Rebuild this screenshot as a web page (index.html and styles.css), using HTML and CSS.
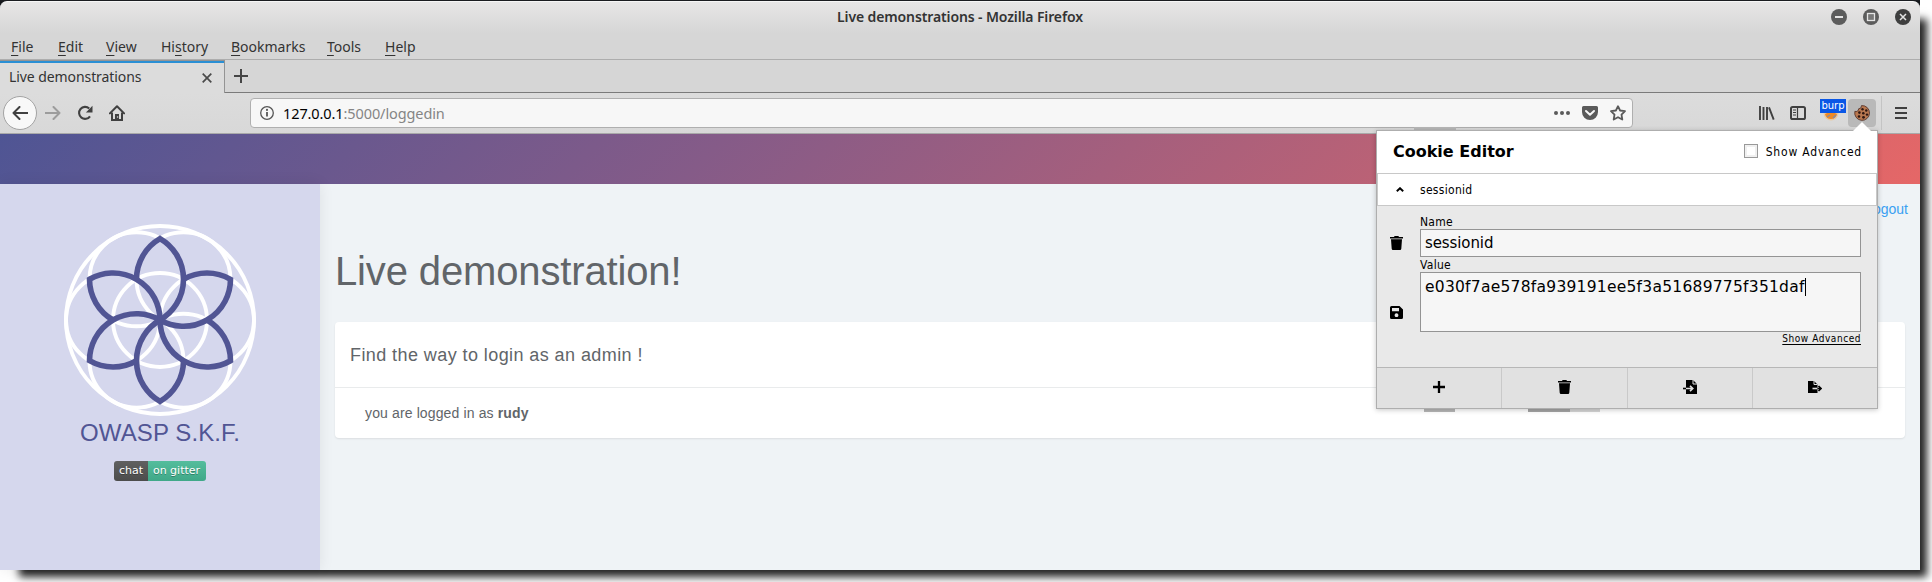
FILE: index.html
```html
<!DOCTYPE html>
<html lang="en">
<head>
<meta charset="utf-8">
<title>Live demonstrations</title>
<link rel="stylesheet" href="styles.css">
</head>
<body>
<div class="window">
  <div class="chrome-top">
    <div class="titlebar">
      <span class="title">Live demonstrations - Mozilla Firefox</span>
      <div class="winbtns">
        <svg width="16" height="16" viewBox="0 0 16 16"><circle cx="8" cy="8" r="8" fill="#5c5c5c"/><path d="M4 8h8" stroke="#e4e4e4" stroke-width="2"/></svg>
        <svg width="16" height="16" viewBox="0 0 16 16"><circle cx="8" cy="8" r="8" fill="#5c5c5c"/><rect x="4.500" y="4.500" width="7" height="7" fill="#777" stroke="#e4e4e4" stroke-width="1.300"/></svg>
        <svg width="16" height="16" viewBox="0 0 16 16"><circle cx="8" cy="8" r="8" fill="#3f3f3f"/><path d="M5 5l6 6M11 5l-6 6" stroke="#e4e4e4" stroke-width="1.5"/></svg>
      </div>
    </div>
    <div class="menubar">
      <span class="m-file"><u>F</u>ile</span><span class="m-edit"><u>E</u>dit</span><span class="m-view"><u>V</u>iew</span><span class="m-history">Hi<u>s</u>tory</span><span class="m-bookmarks"><u>B</u>ookmarks</span><span class="m-tools"><u>T</u>ools</span><span class="m-help"><u>H</u>elp</span>
    </div>
  </div>
  <div class="tabs">
    <div class="tab"><span>Live demonstrations</span>
      <svg width="10" height="10" viewBox="0 0 10 10"><path d="M.7.7l8.6 8.6M9.3.7L.7 9.3" stroke="#4a4a4a" stroke-width="1.7"/></svg>
    </div>
    <div class="newtab"><svg width="14" height="14" viewBox="0 0 14 14"><path d="M7 0v14M0 7h14" stroke="#454545" stroke-width="2"/></svg></div>
  </div>
  <div class="navbar">
    <div class="back"><svg width="16" height="14" viewBox="0 0 16 14"><path d="M15.5 7H1.5M7.5 1l-6 6 6 6" fill="none" stroke="#404040" stroke-width="2" stroke-linecap="round" stroke-linejoin="round"/></svg></div>
    <svg class="fwd" width="16" height="14" viewBox="0 0 16 14"><path d="M.5 7h14M8.500 1l6 6-6 6" fill="none" stroke="#9c9c9c" stroke-width="2" stroke-linecap="round" stroke-linejoin="round"/></svg>
    <svg class="reload" width="16" height="16" viewBox="0 0 16 16"><path d="M12.200 3.500A6 6 0 1 0 13 11.300" fill="none" stroke="#404040" stroke-width="2.100"/><path d="M15.500 .8v6.600H8.900z" fill="#404040"/></svg>
    <svg class="home" width="16" height="16" viewBox="0 0 16 16"><path d="M.9 8.400L8 1.300l7.100 7.100" fill="none" stroke="#404040" stroke-width="2" stroke-linecap="round" stroke-linejoin="round"/><path d="M3 7.500V15h10V7.500" fill="none" stroke="#404040" stroke-width="2"/><path d="M6 9h4v6H6z" fill="#404040"/><circle cx="8.600" cy="12" r=".8" fill="#ddd"/></svg>
    <div class="urlbar">
      <svg width="14" height="14" viewBox="0 0 14 14"><circle cx="7" cy="7" r="6.300" fill="none" stroke="#555" stroke-width="1.300"/><path d="M7 6v4.500" stroke="#555" stroke-width="1.800"/><circle cx="7" cy="3.900" r="1.050" fill="#555"/></svg>
      <span class="url"><b>127.0.0.1</b>:5000/loggedin</span>
      <svg class="dots" width="16" height="4" viewBox="0 0 16 4"><g fill="#5a5a5a"><circle cx="2" cy="2" r="2"/><circle cx="8" cy="2" r="2"/><circle cx="14" cy="2" r="2"/></g></svg>
      <svg class="pocket" width="16" height="14" viewBox="0 0 16 14"><path d="M1.500 0h13A1.500 1.500 0 0 1 16 1.500V6a8 8 0 0 1-16 0V1.500A1.500 1.500 0 0 1 1.500 0z" fill="#5a5a5a"/><path d="M4 5l4 3.800L12 5" fill="none" stroke="#f7f7f7" stroke-width="2" stroke-linecap="round" stroke-linejoin="round"/></svg>
      <svg class="star" width="16" height="16" viewBox="0 0 16 16"><path d="M8 1.200l2.100 4.300 4.900.7-3.500 3.400.8 4.900L8 12.200l-4.300 2.300.8-4.900L1 6.200l4.900-.7z" fill="none" stroke="#5a5a5a" stroke-width="1.800" stroke-linejoin="round"/></svg>
    </div>
    <svg class="library" width="16" height="14" viewBox="0 0 16 14"><path d="M1 0v14M4.500 1v13M8 1v13M10 1.300l4.700 12.300" stroke="#404040" stroke-width="1.900"/></svg>
    <svg class="sidebtn" width="16" height="14" viewBox="0 0 16 14"><rect x="1" y="1" width="14" height="12" rx="1.600" fill="none" stroke="#404040" stroke-width="2"/><path d="M7.500 1v12" stroke="#404040" stroke-width="1.200"/><path d="M3 4h3M3 6.500h3M3 9h3" stroke="#404040"/></svg>
    <div class="burp"><span>burp</span>
      <svg width="16" height="16" viewBox="0 0 16 16"><circle cx="8" cy="8" r="7.500" fill="#e9c9a2"/><path d="M2 9q6-4 12 0-1 5-6 5T2 9z" fill="#f08a24"/><path d="M4 12l3-2M13 10l-3 3" stroke="#7f8bab" stroke-width="1.200"/></svg>
    </div>
    <div class="cookie"><svg width="16" height="16" viewBox="0 0 16 16"><path d="M7.500.6A3 3 0 0 1 4.600 3.800 2.600 2.600 0 0 1 .9 6.300 7.400 7.400 0 1 0 7.500.6z" fill="#b97850" stroke="#4c2b22" stroke-width=".8"/><g fill="#2e1712"><circle cx="8.500" cy="4.200" r="1.200"/><circle cx="12.300" cy="5.500" r="1.200"/><circle cx="5.400" cy="7.600" r="1.300"/><circle cx="9.300" cy="8.200" r="1.300"/><circle cx="13" cy="9.600" r="1.200"/><circle cx="5" cy="11.500" r="1.300"/><circle cx="9.500" cy="12.300" r="1.400"/></g></svg></div>
    <i class="sep"></i>
    <svg class="burger" width="12" height="12" viewBox="0 0 12 12"><path d="M0 1h12M0 6h12M0 11h12" stroke="#404040" stroke-width="2"/></svg>
  </div>
  <div class="banner"></div>
  <div class="page">
    <aside class="sidebar">
      <svg class="logo" width="192" height="192" viewBox="-96 -96 192 192">
        <g fill="none" stroke="#fff" stroke-width="3.900">
          <circle r="94"/><circle r="47"/>
          <circle cx="47" r="47"/><circle cx="-47" r="47"/>
          <circle cx="23.500" cy="-40.700" r="47"/><circle cx="-23.500" cy="-40.700" r="47"/>
          <circle cx="23.500" cy="40.700" r="47"/><circle cx="-23.500" cy="40.700" r="47"/>
        </g>
        <defs><path id="petal" d="M-23.500-40.700A47 47 0 0 1 0-81.400 47 47 0 0 1 0 0"/></defs>
        <g fill="none" stroke="#515594" stroke-width="5.600" stroke-miterlimit="6">
          <use href="#petal"/><use href="#petal" transform="rotate(60)"/><use href="#petal" transform="rotate(120)"/><use href="#petal" transform="rotate(180)"/><use href="#petal" transform="rotate(240)"/><use href="#petal" transform="rotate(300)"/>
        </g>
      </svg>
      <div class="brand">OWASP S.K.F.</div>
      <div class="badge"><span>chat</span><span class="green">on gitter</span></div>
    </aside>
    <main class="main">
      <a class="logout">Logout</a>
      <h1>Live demonstration!</h1>
      <section class="card">
        <h2>Find the way to login as an admin !</h2>
        <p>you are logged in as <b>rudy</b></p>
      </section>
    </main>
  </div>

  <i class="smudge s1"></i><i class="smudge s2"></i><i class="smudge s3"></i><i class="smudge s4"></i>
  <div class="popup">
    <i class="arrow"></i>
    <header><strong>Cookie Editor</strong><i class="check"></i><span class="adv">Show Advanced</span></header>
    <div class="row"><svg width="8" height="5" viewBox="0 0 8 5"><path d="M.8 4.200L4 1.200l3.200 3" fill="none" stroke="#000" stroke-width="1.900"/></svg><span>sessionid</span></div>
    <div class="form">
      <div class="acts">
        <svg class="trash" width="13" height="14" viewBox="0 0 13 14"><path d="M0 1h4l.6-1h3.800L9 1h4v1.600H0zM1 3.300h11l-.7 9.500a1.300 1.300 0 0 1-1.300 1.200H3a1.300 1.300 0 0 1-1.300-1.200z"/></svg>
        <svg width="13" height="13" viewBox="0 0 13 13"><path fill-rule="evenodd" d="M1.500 0h8L13 3.500v8a1.500 1.500 0 0 1-1.500 1.500h-10A1.500 1.500 0 0 1 0 11.500v-10A1.500 1.500 0 0 1 1.500 0zM2 2v3.200h7V2zM6.500 7.300a1.900 1.900 0 1 0 .01 0z"/></svg>
      </div>
      <div class="fields">
        <label>Name</label>
        <div class="input">sessionid</div>
        <label class="lv">Value</label>
        <div class="input area">e030f7ae578fa939191ee5f3a51689775f351daf<i class="caret"></i></div>
        <a>Show Advanced</a>
      </div>
    </div>
    <footer>
      <div><svg width="12" height="12" viewBox="0 0 12 12"><path d="M6 0v12M0 6h12" stroke="#000" stroke-width="2.300"/></svg></div>
      <div><svg width="13" height="14" viewBox="0 0 13 14"><path d="M0 1h4l.6-1h3.800L9 1h4v1.600H0zM1 3.300h11l-.7 9.500a1.300 1.300 0 0 1-1.300 1.200H3a1.300 1.300 0 0 1-1.300-1.200z"/></svg></div>
      <div><svg width="14" height="14" viewBox="0 0 14 14"><path d="M3 0h7l4 4v10H3z"/><path d="M10 0v4h4" fill="none" stroke="#e1e1e1"/><path d="M3 8.500h6M7 5.800l2.800 2.700L7 11.200" fill="none" stroke="#e1e1e1" stroke-width="1.600"/><path d="M0 8.500h3" stroke="#000" stroke-width="1.600"/></svg></div>
      <div><svg width="14" height="14" viewBox="0 0 14 14"><path d="M0 1h6l3.500 3.500V13H0z"/><path d="M6 1v3.500h3.500" fill="none" stroke="#e1e1e1"/><path d="M4.500 8.500h5" stroke="#e1e1e1" stroke-width="1.600"/><path d="M9.500 8.500H13M10.500 6l2.500 2.500-2.500 2.500" fill="none" stroke="#000" stroke-width="1.600"/></svg></div>
    </footer>
  </div>
</div>
</body>
</html>
```
FILE: styles.css
```css
* { box-sizing: border-box; }
body { margin: 0; background: #fff; width: 1932px; height: 582px; overflow: hidden; }
svg { display: block; flex: none; }
.window {
  position: relative; width: 1920px; height: 570px; display: flex; flex-direction: column;
  box-shadow: 13px 13px 8px -6px #262626; background: #15171b;
  font: 14px/20px "Noto Sans", sans-serif; color: #333;
}
.chrome-top {
  height: 60px; border-top: 1px solid #1a1c20; border-bottom: 1px solid #adadad;
}
.titlebar {
  height: 32px; display: flex; align-items: center; justify-content: center; position: relative;
  background: linear-gradient(#e7e6e6, #d6d6d6); border-radius: 7px 7px 0 0; border-top: 1px solid #f6f6f6;
}
.title { font-weight: 600; letter-spacing: -.12px; color: #333; white-space: nowrap; padding-bottom: 2px; }
.winbtns { position: absolute; right: 9px; top: 7px; display: flex; gap: 16px; }
.menubar { height: 26px; background: #d6d6d6; display: flex; align-items: center; padding: 1px 0 0 11px; line-height: 25px; }
.menubar span { white-space: nowrap; flex: none; }
.menubar u { text-underline-offset: 3px; text-decoration-thickness: 1px; }
.m-file { width: 47px; } .m-edit { width: 48px; } .m-view { width: 55px; } .m-history { width: 70px; }
.m-bookmarks { width: 96px; } .m-tools { width: 58px; }
.tabs { height: 33px; display: flex; background: #d6d6d6; }
.tab {
  width: 225px; border-top: 1px solid #949494; border-right: 1px solid #949494; background: #dcdcdc;
  box-shadow: inset 0 2px 0 #2a8fd4; display: flex; align-items: center; justify-content: space-between;
  padding: 2px 12px 0 9px; white-space: nowrap; letter-spacing: -.08px;
}
.tab span { padding-bottom: 2px; }
.newtab { flex: 1; border-bottom: 1px solid #7b7b7b; padding: 9px 0 0 9px; }
.navbar {
  height: 41px; background: linear-gradient(#dcdcdc, #d8d8d8); border-bottom: 1px solid #a9a9a9;
  display: flex; align-items: center; padding-left: 3px;
}
.back { width: 34px; height: 34px; border-radius: 50%; border: 1px solid #a3a3a3; background: #f8f8f8; display: flex; align-items: center; justify-content: center; }
.fwd { margin-left: 8px; } .reload { margin-left: 16px; } .home { margin-left: 16px; }
.urlbar {
  margin-left: 125px; width: 1383px; height: 30px; border: 1px solid #afafaf; border-radius: 4px;
  background: #f7f7f7; display: flex; align-items: center; padding-left: 9px;
}
.url { margin-left: 9px; font-size: 14.5px; letter-spacing: -.1px; color: #858585; flex: 1; }
.url b { font-weight: 400; color: #000; }
.pocket { margin-left: 12px; } .star { margin: 0 6px 0 12px; }
.library { margin-left: 126px; } .sidebtn { margin-left: 15px; }
.burp { position: relative; width: 16px; margin-left: 17px; }
.burp span {
  position: absolute; left: -3px; top: -6px; width: 26px; height: 14px; background: #0a57e6; color: #fff;
  font: 10px/14px "DejaVu Sans", sans-serif; text-align: center;
}
.cookie { margin-left: 9px; width: 28px; height: 28px; border-radius: 4px; background: #b9b9b9; display: flex; align-items: center; justify-content: center; }
.sep { width: 1px; height: 34px; background: #c4c4c4; margin: 0 13px 0 5px; }
.banner { height: 50px; background: linear-gradient(135deg, #4f5594, #855b88 37%, #e56767); }
.page { flex: 1; display: flex; background: #eff3f6; font-family: "Liberation Sans", sans-serif; color: #616569; }
.sidebar { width: 320px; background: #d5d7ed; box-shadow: 0 0 14px rgba(0,0,0,.08); display: flex; flex-direction: column; align-items: center; padding-top: 40px; }
.brand { font-size: 24px; line-height: 28px; margin-top: 3px; color: #515594; letter-spacing: .1px; white-space: nowrap; }
.badge {
  margin-top: 14px; width: 92px; height: 20px; border-radius: 3px; overflow: hidden; display: flex;
  font: 11px/20px "DejaVu Sans", sans-serif; color: #fff; text-shadow: 0 1px 0 rgba(1,1,1,.3); white-space: nowrap;
}
.badge span { width: 34px; text-align: center; background: linear-gradient(#606060, #4c4c4c); }
.badge .green { width: 58px; background: linear-gradient(#54bd9c, #40a888); padding-right: 1px; }
.main { flex: 1; padding: 0 15px; display: flex; flex-direction: column; }
.logout { align-self: flex-end; margin: 15px -3px 0 0; line-height: 20px; color: #3aa0f2; }
h1 { margin: 30px 0 0; font-size: 40px; line-height: 44px; font-weight: 400; letter-spacing: -.14px; }
.card { margin-top: 29px; height: 116px; background: #fff; border-radius: 4px; box-shadow: 0 1px 2px rgba(0,0,0,.09); }
h2 { margin: 0; height: 66px; padding-left: 15px; font-size: 18px; line-height: 66px; font-weight: 400; letter-spacing: .42px; border-bottom: 1px solid #e9ebec; }
p { margin: 0; padding-left: 30px; line-height: 50px; letter-spacing: .13px; }
.smudge { position: absolute; height: 4px; background: #b7b7b7; }
.s1 { left: 1414px; top: 127px; width: 42px; }
.s2 { left: 1424px; top: 408px; width: 31px; }
.s3 { left: 1528px; top: 408px; width: 42px; background: #a5a5a5; }
.s4 { left: 1570px; top: 408px; width: 30px; background: #d6d6d6; }
.popup {
  position: absolute; left: 1376px; top: 130px; width: 502px; height: 279px; border: 1px solid #aeaeae;
  background: #e9e9e9; box-shadow: 0 1px 5px rgba(0,0,0,.22); color: #000;
  font: 12px/14px "DejaVu Sans Condensed", "DejaVu Sans", sans-serif; letter-spacing: .3px; display: flex; flex-direction: column;
}
.arrow { position: absolute; left: 476px; top: -9px; width: 18px; height: 9px; background: #fff; clip-path: polygon(50% 0, 100% 100%, 0 100%); }
.popup header { height: 42px; background: #fff; display: flex; align-items: center; padding: 0 15px 0 16px; }
.popup strong { font: bold 16px/20px "DejaVu Sans", sans-serif; letter-spacing: 0; flex: 1; }
.adv { letter-spacing: .8px; }
.check { width: 14px; height: 14px; border: 1px solid #999; background: #fff; box-shadow: inset 0 0 0 2px #f0f0f0; margin: -3px 8px 0 0; }
.row { height: 33px; background: #fff; border: 1px solid #c8c8c8; display: flex; align-items: center; padding-left: 18px; gap: 16px; }
.form { flex: 1; display: flex; }
.acts { width: 43px; padding: 30px 0 0 13px; }
.acts svg + svg { margin-top: 56px; }
.fields { width: 441px; padding-top: 9px; display: flex; flex-direction: column; }
.input { height: 28px; border: 1px solid #949494; background: #f6f6f6; font: 15px/27px "DejaVu Sans", sans-serif; letter-spacing: -.1px; padding-left: 4px; white-space: nowrap; }
.fields .lv { margin-top: 1px; }
.area { height: 60px; display: flex; font-size: 15.5px; line-height: 28px; letter-spacing: .25px; }
.caret { width: 1px; height: 18px; background: #000; margin-top: 5px; }
.fields a { align-self: flex-end; font-size: 10px; line-height: 13px; letter-spacing: .55px; text-decoration: underline; text-underline-offset: 2px; }
.popup footer { height: 41px; display: flex; background: #e1e1e1; border-top: 1px solid #b7b7b7; }
footer div { flex: 1; display: flex; align-items: center; justify-content: center; padding-bottom: 2px; }
footer div + div { border-left: 1px solid #c9c9c9; }
```
